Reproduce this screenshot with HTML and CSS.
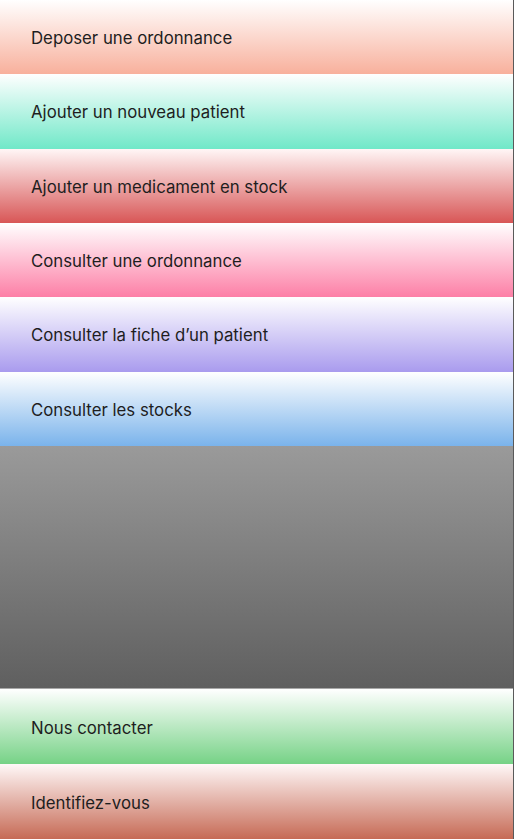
FILE: index.html
```html
<!DOCTYPE html>
<html lang="fr">
<head>
<meta charset="utf-8">
<title>Pharmacie</title>
<link rel="stylesheet" href="styles.css">
</head>
<body>
<nav class="menu">
  <a class="item item-deposer" href="#">Deposer une ordonnance</a>
  <a class="item item-patient" href="#">Ajouter un nouveau patient</a>
  <a class="item item-medic" href="#">Ajouter un medicament en stock</a>
  <a class="item item-consult" href="#">Consulter une ordonnance</a>
  <a class="item item-fiche" href="#">Consulter la fiche d’un patient</a>
  <a class="item item-stocks" href="#">Consulter les stocks</a>
  <div class="spacer"></div>
  <a class="item item-bottom item-contact" href="#">Nous contacter</a>
  <a class="item item-bottom item-ident" href="#">Identifiez-vous</a>
</nav>
</body>
</html>
```
FILE: styles.css
```css
html, body {
  margin: 0;
  padding: 0;
  height: 100%;
}
body {
  background: #5a5a5a;
  font-family: Inter, "Noto Sans", sans-serif;
}
.menu {
  width: 513px;
  height: 839px;
  display: flex;
  flex-direction: column;
}
.item {
  flex: 0 0 74.33px;
  display: flex;
  align-items: center;
  padding-left: 31px;
  padding-top: 2px;
  box-sizing: border-box;
  color: #1e1e1e;
  font-size: 16.8px;
  text-decoration: none;
}
.item-bottom {
  flex-basis: 75px;
}
.spacer {
  flex: 1;
  background: linear-gradient(#9a9a9a, #5f5f5f);
  border-bottom: 1px solid #a8a8a8;
}
.item-deposer { background: linear-gradient(#ffffff, #f8b09c); }
.item-patient { background: linear-gradient(#ffffff, #70e8c8); }
.item-medic { background: linear-gradient(#fff6f6, #d85656); }
.item-consult { background: linear-gradient(#ffffff, #fd7fa6); }
.item-fiche { background: linear-gradient(#ffffff, #a99bee); }
.item-stocks { background: linear-gradient(#ffffff, #7ab3eb); }
.item-contact { background: linear-gradient(#ffffff, #76d286); }
.item-ident { background: linear-gradient(#fff8f8, #c66a55); }
```
